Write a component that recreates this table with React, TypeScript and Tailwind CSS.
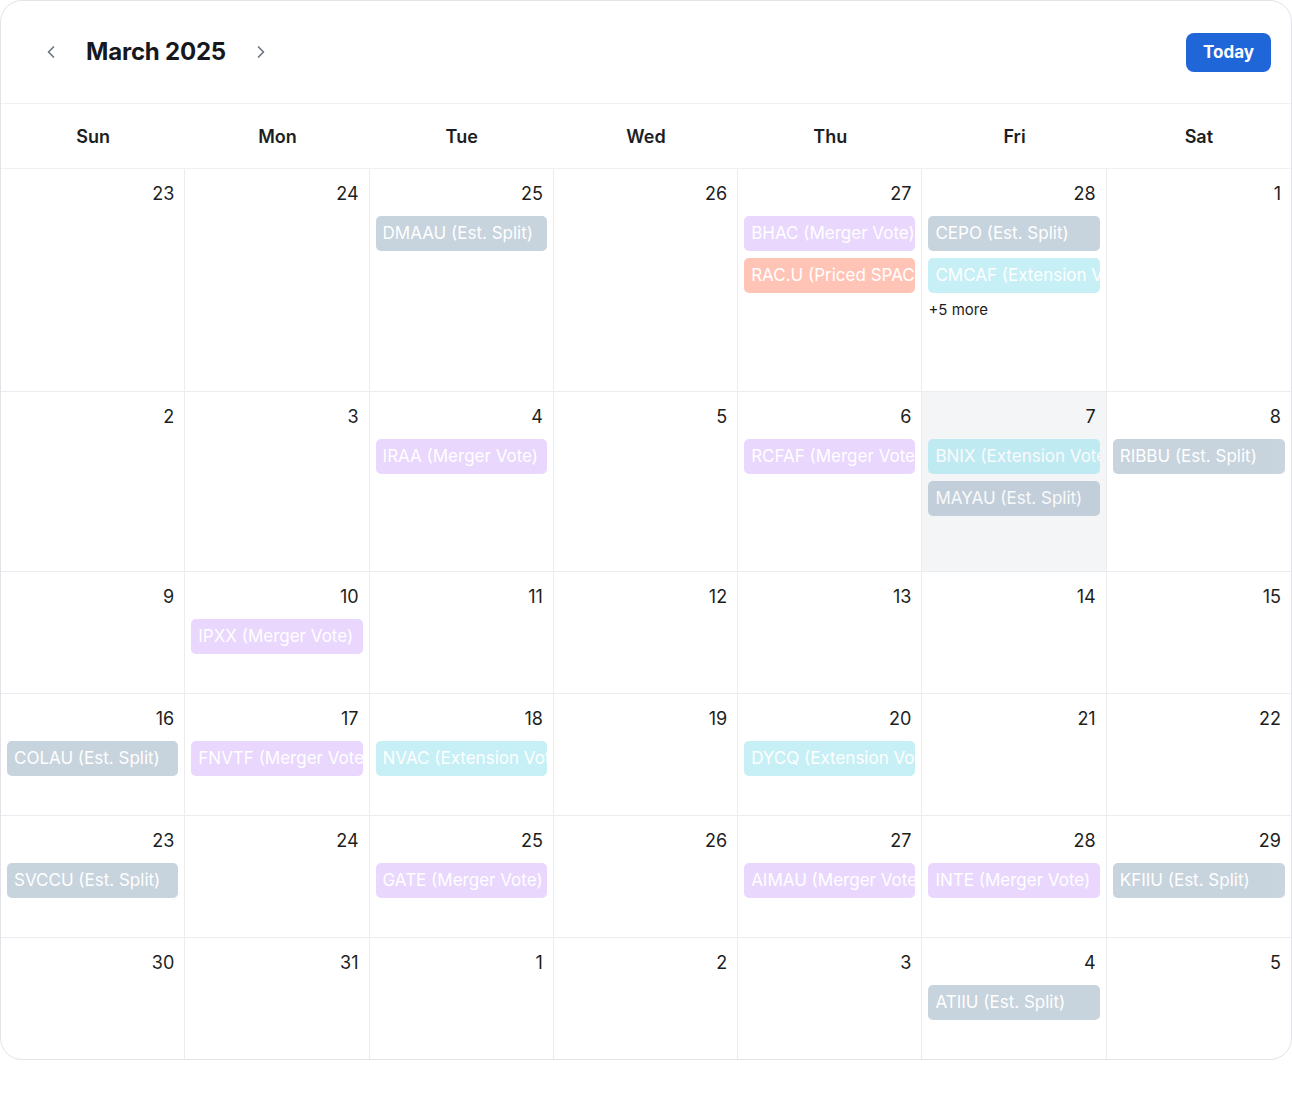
import React from "react";
import { ChevronLeft, ChevronRight } from "lucide-react";

type Kind = "split" | "merger" | "priced" | "ext";
type Ev = { t: string; k: Kind };
type Cell = { d: number; ev?: Ev[]; more?: number; hl?: boolean };

const kindCls: Record<Kind, string> = {
  split: "bg-[#91a9bd]",
  merger: "bg-[#d4b0fe]",
  priced: "bg-[#ff8a6e]",
  ext: "bg-[#8ee0ef]",
};

const S = (t: string): Ev => ({ t: `${t} (Est. Split)`, k: "split" });
const M = (t: string): Ev => ({ t: `${t} (Merger Vote)`, k: "merger" });
const X = (t: string): Ev => ({ t: `${t} (Extension Vote)`, k: "ext" });
const P = (t: string): Ev => ({ t: `${t} (Priced SPAC)`, k: "priced" });

const weeks: Cell[][] = [
  [
    { d: 23 },
    { d: 24 },
    { d: 25, ev: [S("DMAAU")] },
    { d: 26 },
    { d: 27, ev: [M("BHAC"), P("RAC.U")] },
    { d: 28, ev: [S("CEPO"), X("CMCAF")], more: 5 },
    { d: 1 },
  ],
  [
    { d: 2 },
    { d: 3 },
    { d: 4, ev: [M("IRAA")] },
    { d: 5 },
    { d: 6, ev: [M("RCFAF")] },
    { d: 7, ev: [X("BNIX"), S("MAYAU")], hl: true },
    { d: 8, ev: [S("RIBBU")] },
  ],
  [
    { d: 9 },
    { d: 10, ev: [M("IPXX")] },
    { d: 11 },
    { d: 12 },
    { d: 13 },
    { d: 14 },
    { d: 15 },
  ],
  [
    { d: 16, ev: [S("COLAU")] },
    { d: 17, ev: [M("FNVTF")] },
    { d: 18, ev: [X("NVAC")] },
    { d: 19 },
    { d: 20, ev: [X("DYCQ")] },
    { d: 21 },
    { d: 22 },
  ],
  [
    { d: 23, ev: [S("SVCCU")] },
    { d: 24 },
    { d: 25, ev: [M("GATE")] },
    { d: 26 },
    { d: 27, ev: [M("AIMAU")] },
    { d: 28, ev: [M("INTE")] },
    { d: 29, ev: [S("KFIIU")] },
  ],
  [
    { d: 30 },
    { d: 31 },
    { d: 1 },
    { d: 2 },
    { d: 3 },
    { d: 4, ev: [S("ATIIU")] },
    { d: 5 },
  ],
];

const days = ["Sun", "Mon", "Tue", "Wed", "Thu", "Fri", "Sat"];

export default function App() {
  return (
    <div className="w-[1292px] h-[1103px] bg-white" style={{ fontFamily: "Inter, 'Noto Sans', sans-serif" }}>
      <div className="w-[1292px] border border-[#e1e3e8] rounded-[22px] overflow-hidden bg-white">
        {/* header */}
        <div className="h-[103px] border-b border-[#eef0f2] flex items-center pl-[39px] pr-[20px]">
          <button className="w-[22px] h-[22px] flex items-center justify-center text-[#6b7280]">
            <ChevronLeft size={20} strokeWidth={2} />
          </button>
          <h1 className="ml-[24px] text-[24px] font-bold text-[#16181d] tracking-[-0.2px]">March 2025</h1>
          <button className="ml-[24px] w-[22px] h-[22px] flex items-center justify-center text-[#6b7280]">
            <ChevronRight size={20} strokeWidth={2} />
          </button>
          <div className="flex-1" />
          <button className="w-[85px] h-[39px] rounded-[8px] bg-[#1f66d9] text-white text-[17px] font-bold mt-[1px]">
            Today
          </button>
        </div>
        {/* day names */}
        <div className="grid grid-cols-7 h-[65px] border-b border-[#eef0f2]">
          {days.map((d) => (
            <div key={d} className="flex items-center justify-center text-[18px] font-semibold text-[#1c1e22]">
              {d}
            </div>
          ))}
        </div>
        {/* weeks */}
        <div className="grid grid-cols-7 grid-rows-[223px_180px_122px_122px_122px_121px]">
          {weeks.map((w, wi) =>
            w.map((c, ci) => (
              <div
                key={`${wi}-${ci}`}
                className={`flex flex-col min-w-0 ${ci < 6 ? "border-r" : ""} ${wi < 5 ? "border-b" : ""} border-[#eaecef] ${c.hl ? "bg-[#f4f5f7]" : ""}`}
              >
                <div className="pt-[11px] pr-[10px] text-right text-[18px] leading-[28px] text-[#1c1e22]">{c.d}</div>
                {c.ev && (
                  <div className="mt-[8px] px-[6px] flex flex-col gap-[7px]">
                    {c.ev.map((e, i) => (
                      <div
                        key={i}
                        className={`h-[35px] rounded-[5px] opacity-50 ${kindCls[e.k]} text-white text-[17px] leading-[35px] px-[7px] whitespace-nowrap overflow-hidden`}
                      >
                        {e.t}
                      </div>
                    ))}
                    {c.more && (
                      <div className="text-[15px] leading-[20px] text-[#1c1e22]">+{c.more} more</div>
                    )}
                  </div>
                )}
              </div>
            ))
          )}
        </div>
      </div>
    </div>
  );
}
